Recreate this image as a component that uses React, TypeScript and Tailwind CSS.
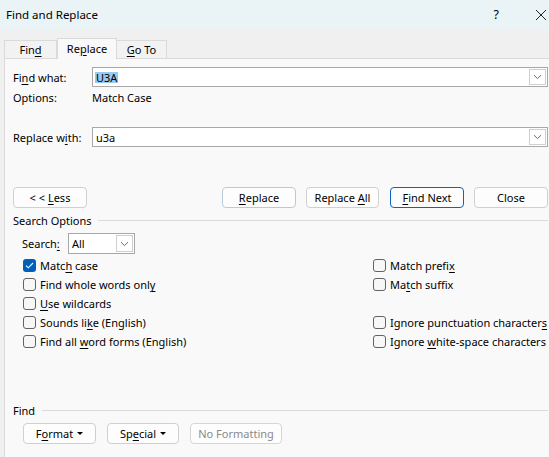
import React from 'react'

// label with an access-key letter underlined
function U({ text, at }: { text: string; at: number }) {
  return (
    <span className="whitespace-pre">
      {text.slice(0, at)}
      <span className="underline underline-offset-[2px] decoration-[1px]">{text[at]}</span>
      {text.slice(at + 1)}
    </span>
  )
}

function Chevron() {
  return (
    <svg width="9" height="6" viewBox="0 0 9 6" fill="none">
      <path d="M1 1.2 4.5 4.6 8 1.2" stroke="#6b6b6b" strokeWidth="1" />
    </svg>
  )
}

function Combo({ children }: { children: React.ReactNode }) {
  return (
    <div className="flex-1 h-[20px] flex border border-[#a8a8a8] bg-white">
      <div className="flex-1 flex items-center pl-[2px]">{children}</div>
      <div className="w-[17px] m-px border border-[#cfcfcf] flex items-center justify-center bg-white">
        <Chevron />
      </div>
    </div>
  )
}

function Btn({ children, w = 'w-[74px]', variant = 'normal' }: { children: React.ReactNode; w?: string; variant?: 'normal' | 'default' | 'hover' | 'disabled' }) {
  const styles = {
    normal: 'border-[#d0d0d0] text-black',
    default: 'border-[#0a64c2] text-black',
    hover: 'border-[#b7cbe0] text-black',
    disabled: 'border-[#d6d6d6] text-[#8a8a8a]',
  }[variant]
  return (
    <div className={`h-[21px] ${w} rounded-[4px] border bg-[#fdfdfd] flex items-center justify-center ${styles}`}>
      {children}
    </div>
  )
}

function Check({ checked = false }: { checked?: boolean }) {
  if (checked) {
    return (
      <div className="w-[13px] h-[13px] rounded-[3px] bg-[#005fb8] flex items-center justify-center shrink-0">
        <svg width="9" height="7" viewBox="0 0 9 7" fill="none">
          <path d="M1 3.6 3.3 5.8 8 1" stroke="white" strokeWidth="1.1" />
        </svg>
      </div>
    )
  }
  return <div className="w-[13px] h-[13px] rounded-[3px] border border-[#636363] bg-[#f7f7f7] shrink-0" />
}

function Option({ children, checked }: { children?: React.ReactNode; checked?: boolean }) {
  if (!children) return <div className="h-[19px]" />
  return (
    <div className="h-[19px] flex items-center gap-[4px] whitespace-nowrap">
      <Check checked={checked} />
      {children}
    </div>
  )
}

function Caret() {
  return <span className="ml-[4px] inline-block w-0 h-0 border-l-[3px] border-r-[3px] border-t-[3px] border-l-transparent border-r-transparent border-t-black" />
}

export default function App() {
  return (
    <div className="w-[549px] h-[457px] overflow-hidden flex flex-col bg-[#f0f0f0] text-[11px] leading-none text-black font-['Noto_Sans',sans-serif]">
      {/* Title bar */}
      <div className="h-[30px] shrink-0 flex items-center bg-[#eaf4f6] pl-[6px]">
        <span className="text-[11.5px]">Find and Replace</span>
        <span className="ml-auto text-[12.5px] mr-[36px]">?</span>
        <svg width="12" height="12" viewBox="0 0 12 12" className="mr-[2px]">
          <path d="M1 1 11 11M11 1 1 11" stroke="#222" strokeWidth="1" />
        </svg>
      </div>

      {/* Tabs */}
      <div className="h-[28px] shrink-0 flex items-end pl-[4px]">
        <div className="w-[53px] h-[18px] border border-b-0 border-[#dadada] bg-[#f2f2f2] flex items-center justify-center">
          <U text="Find" at={3} />
        </div>
        <div className="w-[60px] h-[21px] border border-b-0 border-[#dadada] bg-[#f9f9f9] flex items-center justify-center pb-[2px] relative top-px">
          <U text="Replace" at={2} />
        </div>
        <div className="w-[50px] h-[18px] border border-b-0 border-l-0 border-[#dadada] bg-[#f2f2f2] flex items-center justify-center">
          <U text="Go To" at={0} />
        </div>
      </div>

      {/* Panel */}
      <div className="flex-1 ml-[4px] border-l border-t border-[#dadada] bg-[#f9f9f9] pl-[8px] pr-px pt-[8px] flex flex-col">
        <div className="flex items-center h-[20px]">
          <div className="w-[79px]"><U text="Find what:" at={2} /></div>
          <Combo>
            <span className="bg-[#99c9ef] px-px">U3A</span>
          </Combo>
        </div>
        <div className="flex items-center h-[20px]">
          <div className="w-[79px]">Options:</div>
          <div>Match Case</div>
        </div>
        <div className="flex items-center h-[20px] mt-[20px]">
          <div className="w-[79px]"><U text="Replace with:" at={9} /></div>
          <Combo>
            <span className="pl-px">u3a</span>
          </Combo>
        </div>

        <div className="flex items-center mt-[40px]">
          <Btn><U text="< < Less" at={4} /></Btn>
          <div className="ml-auto flex gap-[10px]">
            <Btn variant="hover"><U text="Replace" at={0} /></Btn>
            <div className="mr-px"><Btn w="w-[73px]"><U text="Replace All" at={8} /></Btn></div>
            <Btn variant="default"><U text="Find Next" at={0} /></Btn>
            <Btn>Close</Btn>
          </div>
        </div>

        <div className="flex items-center h-[18px] mt-[3px]">
          <span>Search Options</span>
          <div className="flex-1 h-px bg-[#dadada] ml-[6px]" />
        </div>

        <div className="flex items-center h-[21px] mt-[4px] pl-[9px]">
          <div className="w-[46px]"><U text="Search:" at={6} /></div>
          <div className="w-[67px] h-[21px] border border-[#a8a8a8] bg-white flex">
            <div className="flex-1 flex items-center pl-[3px]">All</div>
            <div className="w-[17px] m-px border border-[#cfcfcf] flex items-center justify-center">
              <Chevron />
            </div>
          </div>
        </div>

        <div className="grid grid-cols-[350px_1fr] mt-[2px] pl-[10px]">
          <div className="flex flex-col">
            <Option checked><U text="Match case" at={4} /></Option>
            <Option><U text="Find whole words only" at={20} /></Option>
            <Option><U text="Use wildcards" at={0} /></Option>
            <Option><U text="Sounds like (English)" at={9} /></Option>
            <Option><U text="Find all word forms (English)" at={9} /></Option>
          </div>
          <div className="flex flex-col">
            <Option><U text="Match prefix" at={11} /></Option>
            <Option><U text="Match suffix" at={2} /></Option>
            <Option />
            <Option><U text="Ignore punctuation characters" at={28} /></Option>
            <Option><U text="Ignore white-space characters" at={7} /></Option>
          </div>
        </div>

        <div className="flex items-center h-[18px] mt-[50px]">
          <span>Find</span>
          <div className="flex-1 h-px bg-[#dadada] ml-[7px]" />
        </div>

        <div className="flex items-center gap-[11px] mt-[4px] pl-[10px]">
          <Btn w="w-[73px]"><U text="Format" at={1} /><Caret /></Btn>
          <Btn w="w-[72px]"><U text="Special" at={2} /><Caret /></Btn>
          <Btn w="w-[92px]" variant="disabled">No Formatting</Btn>
        </div>
      </div>
    </div>
  )
}
